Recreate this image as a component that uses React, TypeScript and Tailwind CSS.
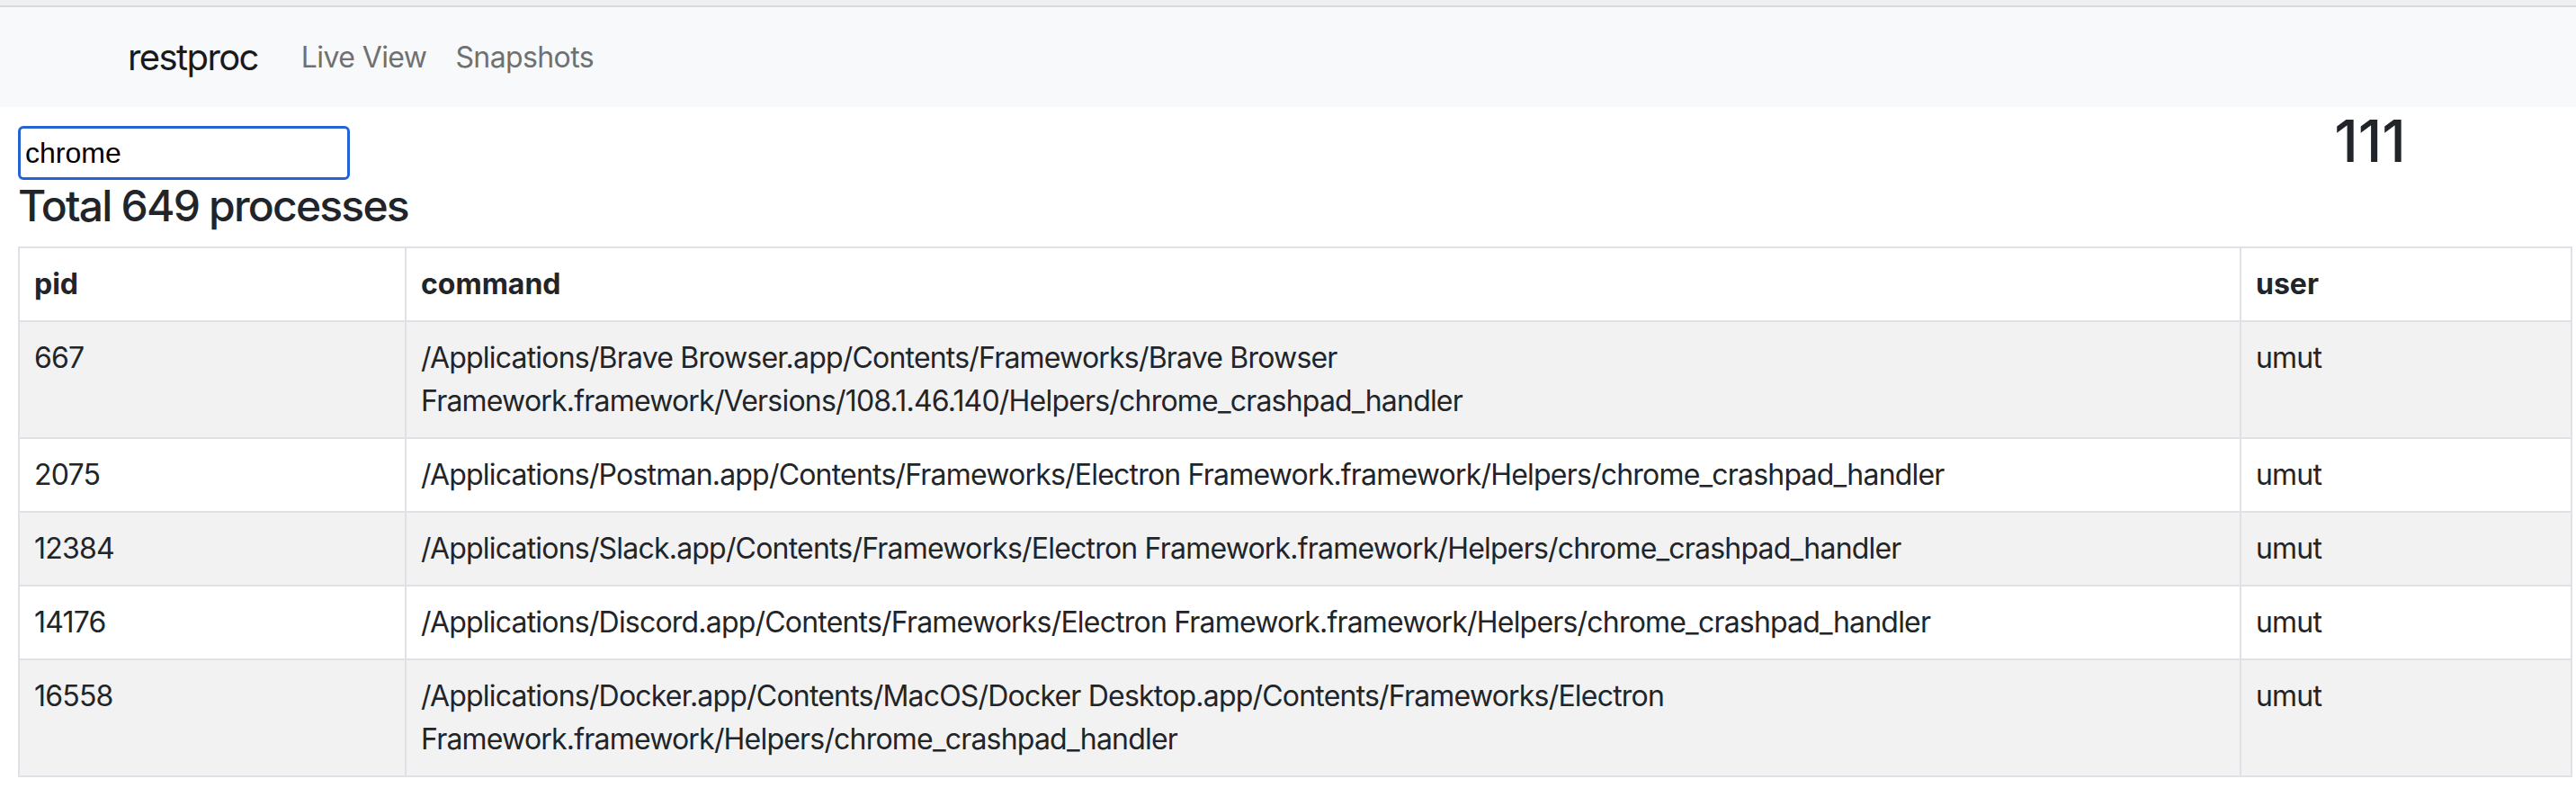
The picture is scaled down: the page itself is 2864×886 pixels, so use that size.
import React from 'react';

interface ProcessRow {
  pid: number;
  command: string;
  user: string;
}

const processes: ProcessRow[] = [
  {
    pid: 667,
    command:
      '/Applications/Brave Browser.app/Contents/Frameworks/Brave Browser Framework.framework/Versions/108.1.46.140/Helpers/chrome_crashpad_handler',
    user: 'umut',
  },
  {
    pid: 2075,
    command:
      '/Applications/Postman.app/Contents/Frameworks/Electron Framework.framework/Helpers/chrome_crashpad_handler',
    user: 'umut',
  },
  {
    pid: 12384,
    command:
      '/Applications/Slack.app/Contents/Frameworks/Electron Framework.framework/Helpers/chrome_crashpad_handler',
    user: 'umut',
  },
  {
    pid: 14176,
    command:
      '/Applications/Discord.app/Contents/Frameworks/Electron Framework.framework/Helpers/chrome_crashpad_handler',
    user: 'umut',
  },
  {
    pid: 16558,
    command:
      '/Applications/Docker.app/Contents/MacOS/Docker Desktop.app/Contents/Frameworks/Electron Framework.framework/Helpers/chrome_crashpad_handler',
    user: 'umut',
  },
];

const App: React.FC = () => {
  return (
    <div className="min-h-[886px] bg-white text-[#212529] font-['Inter',sans-serif]">
      {/* browser chrome strip */}
      <div className="h-[6px] bg-[#efefef]" />
      <div className="h-[2px] bg-[#d9d9d9]" />

      {/* Navbar */}
      <nav className="h-[111px] bg-[#f8f9fa] flex items-center pl-[142px]">
        <span className="text-[40px] leading-[60px] tracking-[-1.6px] text-[#1a1a1a] mr-[32px]">restproc</span>
        <a className="text-[32px] leading-[48px] tracking-[-0.6px] text-[#6f7071] px-[16px]">Live View</a>
        <a className="text-[32px] leading-[48px] tracking-[-0.6px] text-[#6f7071] px-[16px]">Snapshots</a>
      </nav>

      <div className="flex">
        <div className="flex-1 pl-[20px]">
          <input
            type="text"
            defaultValue="chrome"
            className="mt-[21px] block w-[369px] h-[60px] px-[5px] border-[3px] border-[#2463d1] rounded-[6px] text-[32px] text-black outline-none font-['Liberation_Sans',Arial,sans-serif]"
          />
          <h4 className="text-[48px] leading-[1.2] font-medium tracking-[-1.8px] mb-[16px]">Total 649 processes</h4>
        </div>
        <div className="w-[458px] text-center">
          <h2 className="text-[64px] leading-[1.2] font-medium">111</h2>
        </div>
      </div>

      <table className="ml-[20px] w-[2838px] table-fixed border-collapse text-[32px] leading-[48px]">
        <colgroup>
          <col className="w-[430px]" />
          <col className="w-[2040px]" />
          <col className="w-[368px]" />
        </colgroup>
        <thead>
          <tr>
            <th className="border-2 border-[#dee2e6] px-[16px] py-[16px] text-left font-bold">pid</th>
            <th className="border-2 border-[#dee2e6] px-[16px] py-[16px] text-left font-bold">command</th>
            <th className="border-2 border-[#dee2e6] px-[16px] py-[16px] text-left font-bold">user</th>
          </tr>
        </thead>
        <tbody className="tracking-[-0.8px]">
          {processes.map((p, i) => (
            <tr key={p.pid} className={i % 2 === 0 ? 'bg-[#f2f2f2]' : 'bg-white'}>
              <td className="border-2 border-[#dee2e6] px-[16px] py-[16px] align-top">{p.pid}</td>
              <td className="border-2 border-[#dee2e6] px-[16px] py-[16px] align-top">{p.command}</td>
              <td className="border-2 border-[#dee2e6] px-[16px] py-[16px] align-top">{p.user}</td>
            </tr>
          ))}
        </tbody>
      </table>
    </div>
  );
};

export default App;
